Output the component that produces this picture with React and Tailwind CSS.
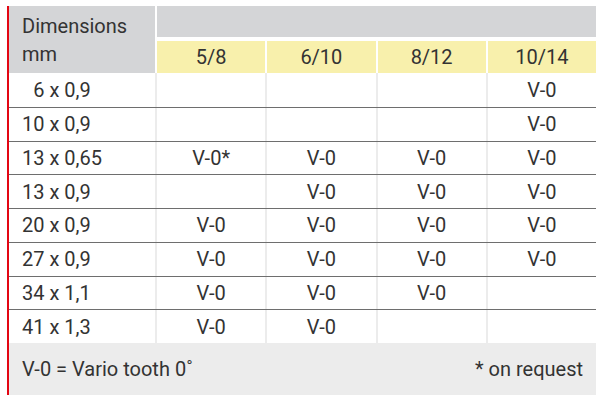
import React from "react";

const sizes = ["5/8", "6/10", "8/12", "10/14"];

const rows = [
  { dim: "\u20076 x 0,9", vals: ["", "", "", "V-0"] },
  { dim: "10 x 0,9", vals: ["", "", "", "V-0"] },
  { dim: "13 x 0,65", vals: ["V-0*", "V-0", "V-0", "V-0"] },
  { dim: "13 x 0,9", vals: ["", "V-0", "V-0", "V-0"] },
  { dim: "20 x 0,9", vals: ["V-0", "V-0", "V-0", "V-0"] },
  { dim: "27 x 0,9", vals: ["V-0", "V-0", "V-0", "V-0"] },
  { dim: "34 x 1,1", vals: ["V-0", "V-0", "V-0", ""] },
  { dim: "41 x 1,3", vals: ["V-0", "V-0", "", ""] },
];

export default function App() {
  return (
    <div
      className="w-[603px] h-[403px] bg-white pt-[6px] pl-[7px] text-[#333333] text-[20px]"
      style={{ fontFamily: "Roboto, 'Liberation Sans', sans-serif" }}
    >
      <div className="w-[589px] border-l-2 border-[#e30613]">
        {/* Header */}
        <div className="flex h-[67px]">
          <div className="w-[146px] bg-[#d4d5d7] pl-[13px] pt-[6px] leading-[28px]">
            Dimensions
            <br />
            mm
          </div>
          <div className="flex-1 ml-[2px] flex flex-col">
            <div className="h-[31px] bg-[#d4d5d7]" />
            <div className="mt-[4px] flex-1 grid grid-cols-4 gap-[2px]">
              {sizes.map((s) => (
                <div key={s} className="bg-[#f8f0ac] flex items-center justify-center">
                  {s}
                </div>
              ))}
            </div>
          </div>
        </div>

        {/* Rows */}
        {rows.map((row, i) => (
          <div
            key={row.dim}
            className={`grid grid-cols-[146px_repeat(4,1fr)] h-[33.75px] ${
              i > 0 ? "border-t border-[#6e6e6e]" : ""
            }`}
          >
            <div className="flex items-center pl-[13px]">{row.dim}</div>
            {row.vals.map((v, j) => (
              <div
                key={j}
                className="flex items-center justify-center border-l-2 border-[#ececec]"
              >
                {v}
              </div>
            ))}
          </div>
        ))}

        {/* Footer */}
        <div className="h-[52px] bg-[#ececec] flex items-center justify-between pl-[13px] pr-[13px]">
          <span>V-0 = Vario tooth 0˚</span>
          <span>* on request</span>
        </div>
      </div>
    </div>
  );
}
